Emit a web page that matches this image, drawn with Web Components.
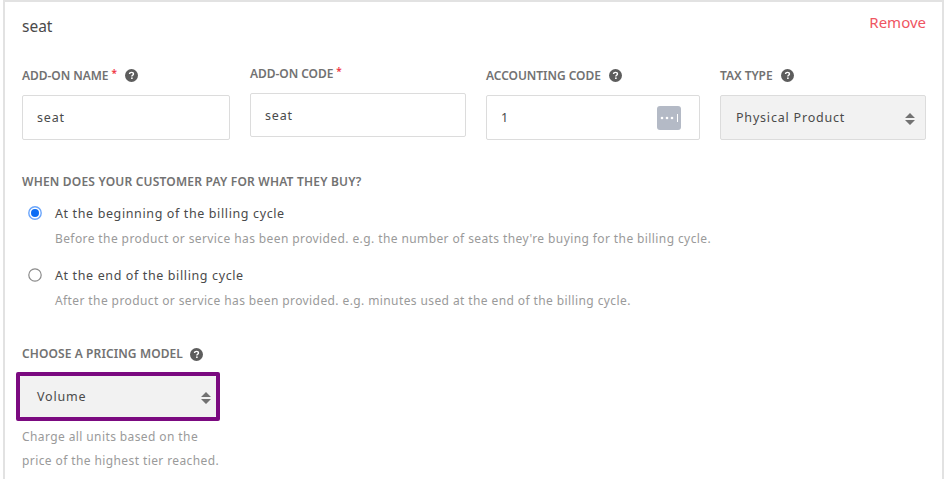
<!DOCTYPE html>
<html>
<head>
<meta charset="utf-8">
<style>
  html, body { margin: 0; background: #fff; }
  body { font-family: "Noto Sans", sans-serif; color: #4a4a4a; overflow: hidden; height: 479px; }
</style>
</head>
<body>
<addon-card heading="seat">
  <field-row>
    <form-field label="ADD-ON NAME" required help><text-box value="seat"></text-box></form-field>
    <form-field label="ADD-ON CODE" required raised><text-box value="seat" raised></text-box></form-field>
    <form-field label="ACCOUNTING CODE" help><text-box value="1" dots></text-box></form-field>
    <form-field label="TAX TYPE" help><select-box value="Physical Product"></select-box></form-field>
  </field-row>
  <pay-timing></pay-timing>
  <pricing-model></pricing-model>
</addon-card>

<script>
const baseText = `font-family: "Noto Sans", sans-serif;`;

class HelpIcon extends HTMLElement {
  constructor() {
    super();
    this.attachShadow({ mode: 'open' }).innerHTML = `
      <style>
        :host { display: inline-flex; width: 13px; height: 13px; }
        svg { display: block; }
      </style>
      <svg width="13" height="13" viewBox="0 0 12 12">
        <circle cx="6" cy="6" r="6" fill="#5d5d5d"/>
        <path d="M4.2 4.7c0-1 .8-1.6 1.8-1.6s1.8.6 1.8 1.5c0 1.2-1.5 1.2-1.5 2.3" fill="none" stroke="#fff" stroke-width="1.3"/>
        <rect x="5.6" y="7.8" width="1.5" height="1.4" fill="#fff"/>
      </svg>`;
  }
}

class FormField extends HTMLElement {
  constructor() {
    super();
    const root = this.attachShadow({ mode: 'open' });
    const req = this.hasAttribute('required') ? '<span class="req">*</span>' : '';
    const help = this.hasAttribute('help') ? '<help-icon></help-icon>' : '';
    root.innerHTML = `
      <style>
        :host { display: block; min-width: 0; }
        :host([raised]) { margin-top: -2px; }
        .label { display: flex; align-items: center; height: 16px; margin-bottom: 12px; ${baseText}
          font-size: 12px; font-weight: 600; color: #727272; white-space: nowrap; letter-spacing: -.05px; }
        .req { color: #ef3340; font-size: 10px; margin-left: 3px; position: relative; top: -2px; }
        help-icon { margin-left: 8px; }
      </style>
      <div class="label">${this.getAttribute('label')}${req}${help}</div>
      <slot></slot>`;
  }
}

class TextBox extends HTMLElement {
  constructor() {
    super();
    const dots = this.hasAttribute('dots') ? `
      <svg class="dots" width="24" height="24" viewBox="0 0 24 24">
        <rect width="24" height="24" rx="3" fill="#b4bac6"/>
        <circle cx="5" cy="12" r="1.3" fill="#fff"/><circle cx="10" cy="12" r="1.3" fill="#fff"/><circle cx="15" cy="12" r="1.3" fill="#fff"/>
        <rect x="20" y="8" width="1" height="8" fill="#fff"/>
      </svg>` : '';
    this.attachShadow({ mode: 'open' }).innerHTML = `
      <style>
        :host { display: flex; align-items: center; justify-content: space-between; box-sizing: border-box;
          height: 45px; padding: 0 18px 0 14px; background: #fff; border: 1px solid #dcdcdc; border-radius: 2px;
          ${baseText} font-size: 12.5px; letter-spacing: .8px; color: #4a4a4a; }
        :host([raised]) { height: 44px; }
      </style>
      <span>${this.getAttribute('value')}</span>${dots}`;
  }
}

class SelectBox extends HTMLElement {
  constructor() {
    super();
    this.attachShadow({ mode: 'open' }).innerHTML = `
      <style>
        :host { display: flex; align-items: center; justify-content: space-between; box-sizing: border-box;
          height: 45px; padding: 0 10px 0 15px; background: #f2f2f2; border: 1px solid #dcdcdc; border-radius: 2px;
          ${baseText} font-size: 12.5px; letter-spacing: .8px; color: #4a4a4a; }
        svg { display: block; margin-top: 3px; }
      </style>
      <span>${this.getAttribute('value')}</span>
      <svg width="10" height="12" viewBox="0 0 10 12">
        <path d="M5 0 10 5H0zM5 12 0 7h10z" fill="#727272"/>
      </svg>`;
  }
}

class RadioOption extends HTMLElement {
  constructor() {
    super();
    const on = this.hasAttribute('checked');
    this.attachShadow({ mode: 'open' }).innerHTML = `
      <style>
        :host { display: grid; grid-template-columns: 14px 1fr; column-gap: 13px; align-items: start; ${baseText} }
        svg { display: block; }
        .title { font-size: 12.5px; line-height: 16px; color: #4a4a4a; letter-spacing: .62px; white-space: nowrap; }
        .note { font-size: 12px; line-height: 16px; margin-top: 9px; color: #9a9a9a; letter-spacing: .4px; white-space: nowrap; }
      </style>
      <svg width="14" height="14" viewBox="0 0 14 14">
        ${on
          ? '<circle cx="7" cy="7" r="6.2" fill="#fff" stroke="#6aa5fb" stroke-width="1.4"/><circle cx="7" cy="7" r="4" fill="#0a6cf5"/>'
          : '<circle cx="7" cy="7" r="6.2" fill="#fff" stroke="#8b8b8b" stroke-width="1.2"/>'}
      </svg>
      <div>
        <div class="title">${this.getAttribute('title')}</div>
        <div class="note"><slot></slot></div>
      </div>`;
  }
}

class PayTiming extends HTMLElement {
  constructor() {
    super();
    this.attachShadow({ mode: 'open' }).innerHTML = `
      <style>
        :host { display: block; margin-top: 34px; ${baseText} }
        .label { font-size: 12px; line-height: 16px; font-weight: 600; color: #727272; letter-spacing: .2px; }
        .options { display: flex; flex-direction: column; gap: 21px; margin: 16px 0 0 6px; }
      </style>
      <div class="label">WHEN DOES YOUR CUSTOMER PAY FOR WHAT THEY BUY?</div>
      <div class="options">
        <radio-option checked title="At the beginning of the billing cycle">Before the product or service has been provided. e.g. the number of seats they're buying for the billing cycle.</radio-option>
        <radio-option title="At the end of the billing cycle">After the product or service has been provided. e.g. minutes used at the end of the billing cycle.</radio-option>
      </div>`;
  }
}

class PricingModel extends HTMLElement {
  constructor() {
    super();
    this.attachShadow({ mode: 'open' }).innerHTML = `
      <style>
        :host { display: block; margin-top: 37px; ${baseText} }
        .label { display: flex; align-items: center; gap: 7px; font-size: 12px; line-height: 16px; font-weight: 600; color: #727272; letter-spacing: .1px; }
        .frame { width: 204px; box-sizing: border-box; margin: 10px 0 0 -6px; border: 4px solid #7b0a80; border-radius: 2px; }
        select-box { height: 41px; border: 0; padding-left: 17px; padding-right: 5px; }
        .note { width: 200px; margin-top: 4px; font-size: 12px; line-height: 24px; color: #9a9a9a; letter-spacing: .4px; }
      </style>
      <div class="label">CHOOSE A PRICING MODEL<help-icon></help-icon></div>
      <div class="frame"><select-box value="Volume"></select-box></div>
      <div class="note">Charge all units based on the price of the highest tier reached.</div>`;
  }
}

class FieldRow extends HTMLElement {
  constructor() {
    super();
    this.attachShadow({ mode: 'open' }).innerHTML = `
      <style>
        :host { display: grid; grid-template-columns: 208px 216px 214px 206px; column-gap: 20px; align-items: start; margin-top: 29px; }
      </style>
      <slot></slot>`;
  }
}

class AddonCard extends HTMLElement {
  constructor() {
    super();
    this.attachShadow({ mode: 'open' }).innerHTML = `
      <style>
        :host { display: block; box-sizing: border-box; width: 941px; height: 479px; margin-left: 3px; padding: 14px 18px 0 17px;
          background: #fff; border: 2px solid #e2e2e2; border-bottom: 0; ${baseText} overflow: hidden; }
        .top { display: flex; justify-content: space-between; align-items: flex-start; height: 22px; }
        .name { font-size: 15.5px; line-height: 20px; color: #4a4a4a; }
        .remove { font-size: 15px; line-height: 20px; color: #ef5561; margin: -4px -2px 0 0; }
      </style>
      <div class="top"><span class="name">${this.getAttribute('heading')}</span><span class="remove">Remove</span></div>
      <slot></slot>`;
  }
}

customElements.define('help-icon', HelpIcon);
customElements.define('form-field', FormField);
customElements.define('text-box', TextBox);
customElements.define('select-box', SelectBox);
customElements.define('radio-option', RadioOption);
customElements.define('pay-timing', PayTiming);
customElements.define('pricing-model', PricingModel);
customElements.define('field-row', FieldRow);
customElements.define('addon-card', AddonCard);
</script>
</body>
</html>
